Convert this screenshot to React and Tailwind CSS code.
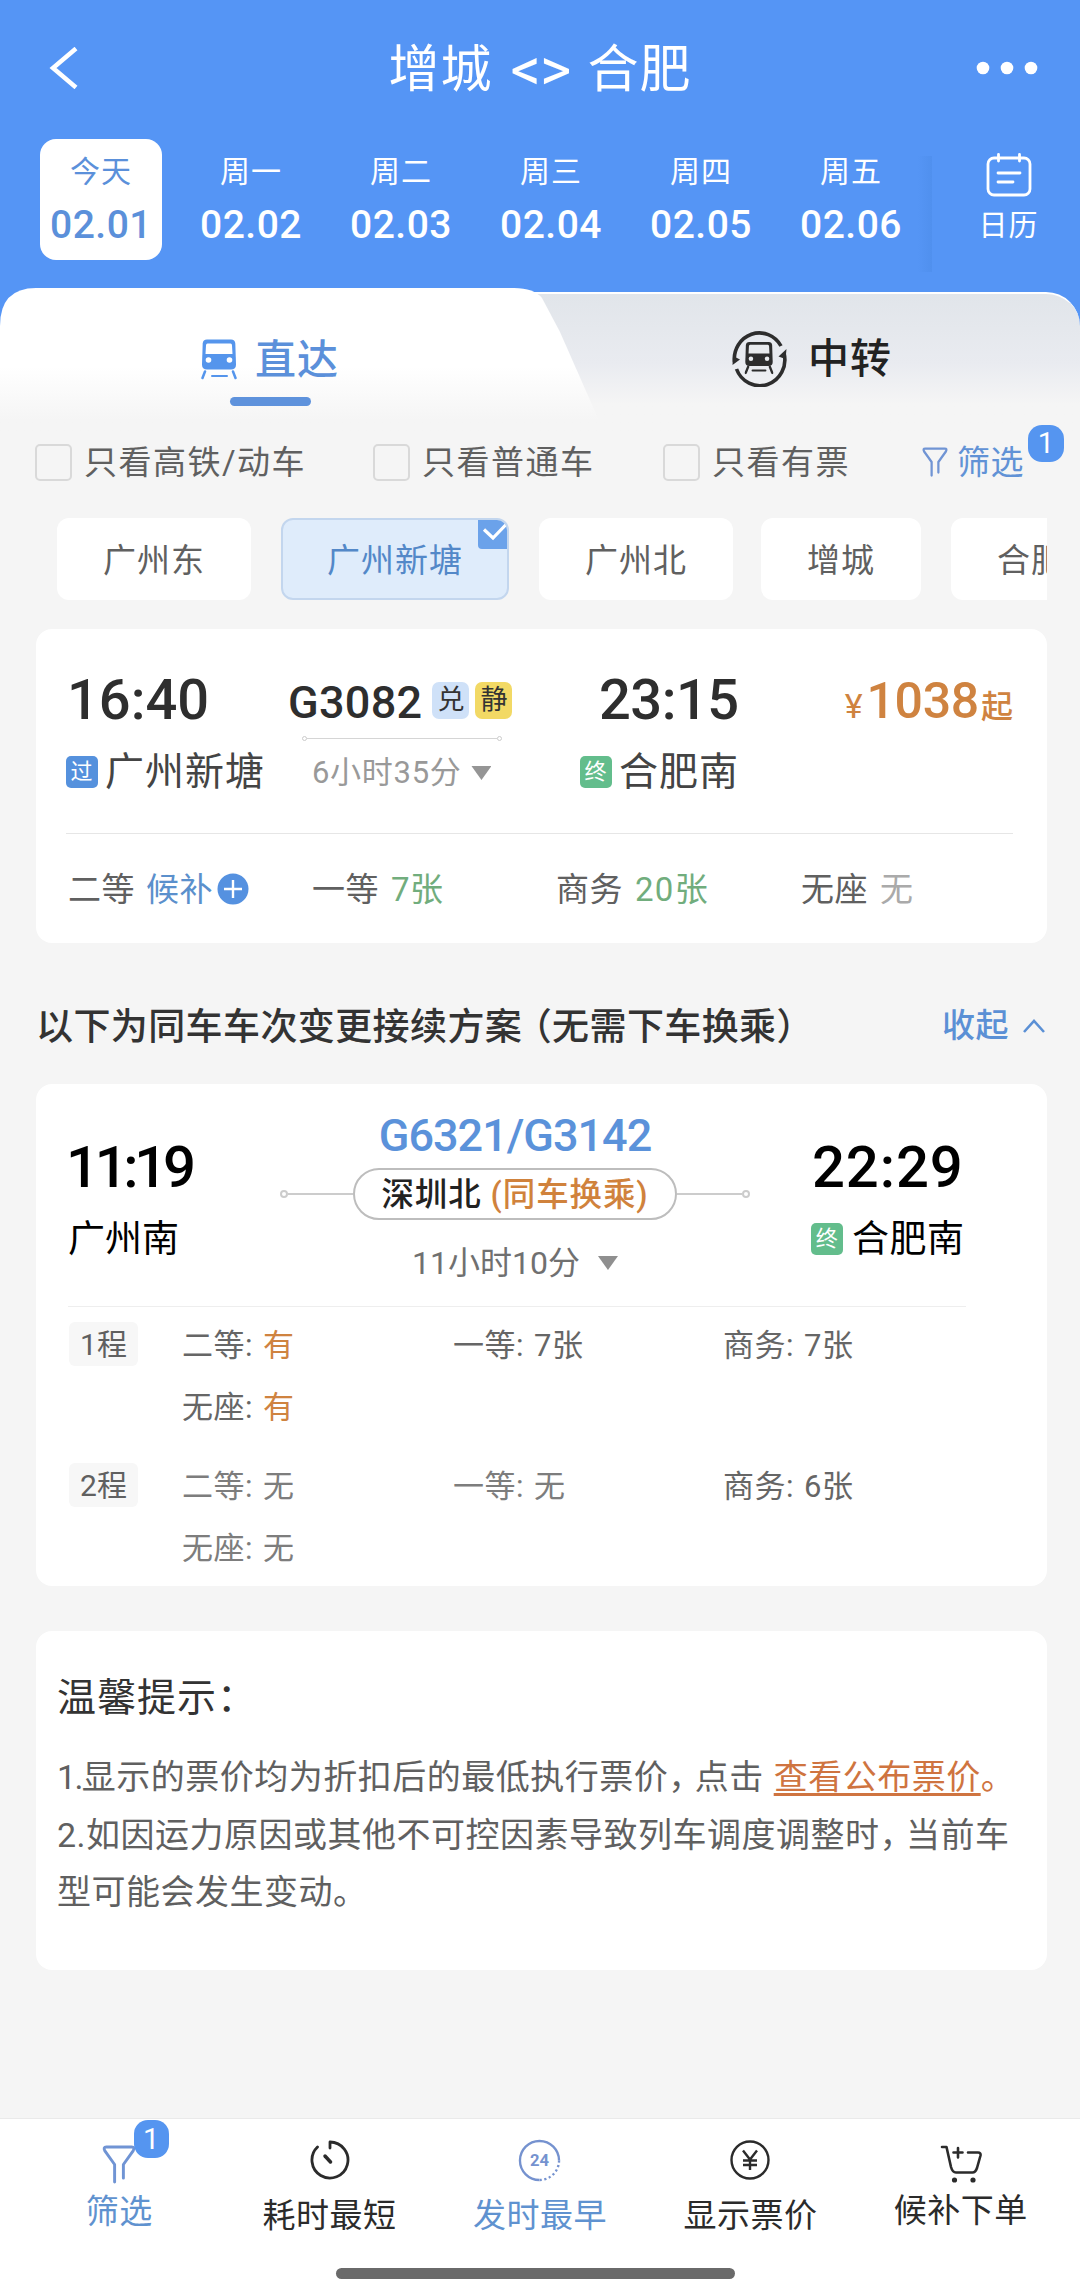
// File: src/App.jsx
import { useState } from 'react';

const days = [
  { week: '今天', date: '02.01' },
  { week: '周一', date: '02.02' },
  { week: '周二', date: '02.03' },
  { week: '周三', date: '02.04' },
  { week: '周四', date: '02.05' },
  { week: '周五', date: '02.06' },
];

const checks = [
  { label: '只看高铁/动车', width: 'w-[338px]' },
  { label: '只看普通车', width: 'w-[290px]' },
  { label: '只看有票', width: 'w-[259px]' },
];

const stations = [
  { name: '广州东', width: 'w-[194px] mr-[30px]' },
  { name: '广州新塘', width: 'w-[228px] mr-[30px]' },
  { name: '广州北', width: 'w-[194px] mr-[28px]' },
  { name: '增城', width: 'w-[160px] mr-[30px]' },
  { name: '合肥', width: 'w-[160px]' },
];

const legs = [
  {
    name: '1程',
    seats: [
      { type: '二等', left: '有' },
      { type: '一等', left: '7张' },
      { type: '商务', left: '7张' },
      { type: '无座', left: '有' },
    ],
  },
  {
    name: '2程',
    seats: [
      { type: '二等', left: '无' },
      { type: '一等', left: '无' },
      { type: '商务', left: '6张' },
      { type: '无座', left: '无' },
    ],
  },
];

function TrainIcon({ className, hole }) {
  return (
    <svg className={className} viewBox="0 0 36 40">
      <path fill="currentColor" d="M6 0H30Q34 0 34.3 4L35 25Q35 30 30 30H6Q1 30 1 25L1.7 4Q2 0 6 0Z" />
      <path fill={hole} d="M6.5 4H29.5Q31 4 31 6L31.5 14.5H4.500L5 6Q5 4 6.500 4Z" />
      <circle cx="7.500" cy="20.500" r="2.800" fill={hole} />
      <circle cx="28.500" cy="20.500" r="2.800" fill={hole} />
      <path fill="none" stroke="currentColor" strokeWidth="2.500" strokeLinecap="round" d="M4 32L1.500 38.500M32 32L34.500 38.500" />
      <path stroke="currentColor" strokeWidth="2" strokeLinecap="round" d="M11 36.500H26" />
    </svg>
  );
}

function TransferIcon() {
  return (
    <svg className="h-[58px] w-[56px] text-[#2d2d2d]" viewBox="0 0 56 58" fill="none">
      <path stroke="currentColor" strokeWidth="3.600" d="M3.500 33A25 26 0 0 1 50 17" />
      <path stroke="currentColor" strokeWidth="3.600" d="M53 24A25 26 0 0 1 5.500 40" />
      <path fill="currentColor" d="M1.500 36L2 27L9 30.500Z" />
      <path fill="currentColor" d="M55.500 20L54.500 30L47.500 27.500Z" />
      <svg x="13.500" y="12.500" width="29" height="33" viewBox="0 0 36 40">
        <path fill="currentColor" d="M6 0H30Q34 0 34.300 4L35 25Q35 30 30 30H6Q1 30 1 25L1.700 4Q2 0 6 0Z" />
        <path fill="#e9ebee" d="M7 3.500H29Q30.500 3.500 30.500 5.500L31 14.500H5L5.500 5.500Q5.500 3.500 7 3.500Z" />
        <circle cx="8" cy="21" r="2.800" fill="#e9ebee" />
        <circle cx="28" cy="21" r="2.800" fill="#e9ebee" />
        <path stroke="currentColor" strokeWidth="3" strokeLinecap="round" d="M4.500 31L1.500 38.500M31.500 31L34.500 38.500" />
        <path stroke="currentColor" strokeWidth="2.500" strokeLinecap="round" d="M10 35.500H26" />
      </svg>
    </svg>
  );
}

function FunnelIcon({ className }) {
  return (
    <svg className={className} viewBox="0 0 34 40" fill="none" stroke="#7094d4" strokeWidth="3" strokeLinecap="round" strokeLinejoin="round">
      <path d="M12.500 38V20L2.500 6Q0.500 2 4 2H30Q33.500 2 31.500 6L21.500 20V34" />
    </svg>
  );
}

function StationTag({ text, className }) {
  return (
    <span className={`flex h-8 w-8 items-center justify-center rounded-[5px] text-[22px] leading-8 text-white ${className}`}>
      {text}
    </span>
  );
}

function Header() {
  return (
    <header className="h-[288px] bg-[#5595f5] text-white">
      <div className="flex h-[136px] items-center justify-between pr-[42px] pl-[48px]">
        <svg className="h-[42px] w-[62px]" viewBox="0 0 62 42" fill="none" stroke="currentColor" strokeWidth="4.500">
          <path d="M28 1.500L5 21L28 40.500" />
        </svg>
        <h1 className="flex items-center pt-[3px] pr-[6px] text-[51px] leading-[60px] tracking-[1px]">
          增城
          <span className="mr-[17px] ml-[18px] text-[60px] leading-[60px] tracking-[-1px]">&lt;&gt;</span>
          合肥
        </h1>
        <svg className="h-[14px] w-[62px]" viewBox="0 0 62 14" fill="currentColor">
          <circle cx="7" cy="7" r="6.300" />
          <circle cx="31" cy="7" r="6.300" />
          <circle cx="55" cy="7" r="6.300" />
        </svg>
      </div>
      <div className="flex h-[152px] pl-[26px]">
        {days.map((d, i) => (
          <div key={d.date} className="flex w-[150px] shrink-0 justify-center pt-[3px]">
            <div className={`flex h-[121px] w-[122px] flex-col items-center rounded-[16px] pt-[15px] ${i === 0 ? 'bg-white text-[#5b90da]' : ''}`}>
              <span className="text-[30px] leading-[36px] tracking-[1px]">{d.week}</span>
              <span className="mt-[15px] text-[39px] leading-[40px] font-medium tracking-[0.500px]">{d.date}</span>
            </div>
          </div>
        ))}
        <div className="mt-[20px] -ml-[8px] h-[116px] w-[14px] bg-linear-to-l from-[#5090ee] to-[#5595f5]" />
        <div className="flex flex-1 flex-col items-center pt-[17px] pl-[5px]">
          <svg className="h-[44px] w-[46px]" viewBox="0 0 46 44" fill="none" stroke="currentColor" strokeWidth="2.800" strokeLinecap="round">
            <rect x="2" y="5" width="42" height="37" rx="6" />
            <path d="M12.500 1.500V8M33.500 1.500V8M12 20H34M12 29H27" />
          </svg>
          <span className="mt-[11px] text-[29px] leading-[36px] tracking-[1px]">日历</span>
        </div>
      </div>
    </header>
  );
}

function Tabs() {
  return (
    <div className="flex h-[144px] bg-linear-to-b from-[#5595f5] from-40% to-[#f5f5f5] to-40%">
      <div className="z-10 flex w-[604px] flex-col items-center bg-linear-to-b from-white from-55% to-[#f5f5f5] to-92% pr-[64px] [clip-path:path('M0_38Q0_0_36_0H514Q534_0_542_10L560_44L604_144H0Z')]">
        <div className="mt-[48px] flex h-[46px] items-center">
          <TrainIcon className="h-[41px] w-[36px] text-[#5595ec]" hole="#fff" />
          <span className="ml-[18px] pt-px text-[41px] leading-[46px] font-medium tracking-[1px] text-[#5b90da]">直达</span>
        </div>
        <div className="mt-[15px] h-[9px] w-[81px] rounded-full bg-[#5e92dc]" />
      </div>
      <div className="mt-1 -ml-[104px] flex-1 rounded-tr-[34px] border-t-2 border-white bg-linear-to-b from-[#e1e5ea] via-[#e9ebf0] via-50% to-[#f5f5f5] to-80% pl-[231px]">
        <div className="mt-[34px] flex items-center">
          <TransferIcon />
          <span className="ml-[21px] pt-[3px] text-[41px] leading-[56px] font-medium tracking-[1px] text-[#222]">中转</span>
        </div>
      </div>
    </div>
  );
}

function Filters() {
  const [picked, setPicked] = useState('广州新塘');
  return (
    <div>
      <div className="flex h-[60px] items-center pl-[35px]">
        {checks.map((c) => (
          <label key={c.label} className={`flex shrink-0 items-center ${c.width}`}>
            <span className="h-[37px] w-[37px] rounded-[5px] border-2 border-[#d9d9d9]" />
            <span className="ml-[12px] pt-[2px] text-[33px] leading-[40px] tracking-[1.500px] text-[#606060]">{c.label}</span>
          </label>
        ))}
        <div className="relative flex items-center text-[#6192d6]">
          <FunnelIcon className="h-[30px] w-[26px]" />
          <span className="ml-[9px] pt-[2px] text-[33px] leading-[40px] tracking-[0.500px]">筛选</span>
          <span className="absolute -top-[16px] left-[106px] flex h-[37px] w-[36px] items-center justify-center rounded-[14px] bg-[#5595f0] text-[29px] leading-[37px] text-white">1</span>
        </div>
      </div>
      <div className="mt-[26px] mr-[33px] ml-[57px] flex h-[83px] overflow-hidden">
        {stations.map((s) => (
          <button
            key={s.name}
            type="button"
            onClick={() => setPicked(s.name)}
            className={`relative h-[82px] shrink-0 overflow-hidden rounded-[12px] text-[33px] tracking-[1px] ${s.width} ${picked === s.name ? 'border-2 border-[#c3d6ee] bg-[#dfecfb] leading-[82px] text-[#5388c8]' : 'bg-white leading-[86px] text-[#606060]'}`}
          >
            {s.name}
            {picked === s.name && (
              <svg className="absolute top-0 right-0 h-[29px] w-[29px]" viewBox="0 0 29 29" fill="none">
                <path fill="#6ba2ea" d="M0 0H29V29H4Q0 29 0 25Z" />
                <path stroke="#fff" strokeWidth="3.200" d="M6 9.500L15 18L28 4.500" />
              </svg>
            )}
          </button>
        ))}
      </div>
    </div>
  );
}

function DirectCard() {
  return (
    <section className="mt-[28px] mr-[33px] ml-[36px] h-[314px] rounded-[16px] bg-white px-[30px] pt-[43px]">
      <div className="flex h-[161px]">
        <div className="w-[222px] shrink-0">
          <div className="pl-px text-[56px] leading-[56px] font-medium text-[#2e2e2e]">16:40</div>
          <div className="mt-[22px] flex items-center text-[39px] leading-[44px] tracking-[1px] text-[#444]">
            <StationTag text="过" className="mr-[7px] bg-[#5591dd]" />
            广州新塘
          </div>
        </div>
        <div className="w-[292px] shrink-0">
          <div className="flex h-[56px] items-center">
            <span className="pt-[5px] text-[45px] leading-[50px] font-medium tracking-[0.300px] text-[#2e2e2e]">G3082</span>
            <span className="ml-[10px] flex h-[37px] w-[37px] items-center justify-center rounded-[7px] bg-[#cfe1f8] text-[27px] leading-[37px] text-[#333]">兑</span>
            <span className="ml-[6px] flex h-[37px] w-[37px] items-center justify-center rounded-[7px] bg-[#f2d965] text-[27px] leading-[37px] text-[#333]">静</span>
          </div>
          <div className="mt-[8px] ml-[14px] flex w-[200px] items-center">
            <span className="h-[5px] w-[5px] rounded-full border border-[#ccc]" />
            <span className="h-px flex-1 bg-[#d5d5d5]" />
            <span className="h-[5px] w-[5px] rounded-full border border-[#ccc]" />
          </div>
          <div className="mt-[11px] ml-[24px] flex items-center text-[31px] leading-[42px] tracking-[0.700px] text-[#999]">
            6小时35分
            <span className="ml-[10px] h-[14px] w-[20px] bg-[#959595] [clip-path:polygon(0_0,100%_0,50%_100%)]" />
          </div>
        </div>
        <div className="w-[200px] shrink-0">
          <div className="pl-[19px] text-[56px] leading-[56px] font-medium tracking-[-0.500px] text-[#2e2e2e]">23:15</div>
          <div className="mt-[22px] flex items-center text-[39px] leading-[44px] tracking-[1px] text-[#444]">
            <StationTag text="终" className="mr-[7px] bg-[#63bd8c]" />
            合肥南
          </div>
        </div>
        <div className="-mr-px flex h-[56px] flex-1 items-baseline justify-end pr-[5px] text-[#cf8340]">
          <span className="mr-[4px] text-[34px]">¥</span>
          <span className="text-[50px] leading-[58px] font-medium tracking-[-0.300px]">1038</span>
          <span className="ml-[2px] text-[32px] font-medium">起</span>
        </div>
      </div>
      <div className="h-px w-[947px] bg-[#e6e6e6]" />
      <div className="mt-[34px] flex h-[44px] pl-[2px] text-[33px] leading-[44px] tracking-[0.500px] text-[#606060]">
        <div className="flex w-[244px] items-center">
          二等<span className="ml-[11px] text-[#5b90cc]">候补</span>
          <svg className="mb-[2px] ml-[4px] h-[32px] w-[32px]" viewBox="0 0 32 32">
            <circle cx="16" cy="16" r="15.500" fill="#5591e0" />
            <path stroke="#fff" strokeWidth="2.400" d="M7 16H25M16 7V25" />
          </svg>
        </div>
        <div className="w-[244px]">一等<span className="ml-[12px] text-[#71ad7d]">7张</span></div>
        <div className="w-[245px]">商务<span className="ml-[12px] tracking-[1.300px] text-[#71ad7d]">20张</span></div>
        <div>无座<span className="ml-[12px] text-[#aaa]">无</span></div>
      </div>
    </section>
  );
}

function TransferCard() {
  return (
    <section className="mt-[32px] mr-[33px] ml-[36px] h-[502px] rounded-[16px] bg-white pt-[30px] text-black">
      <div className="flex h-[192px] pl-[32px]">
        <div className="w-[212px] pt-[23px]">
          <div className="ml-[-2px] text-[58px] leading-[60px] font-medium tracking-[-4.300px]">11:19</div>
          <div className="mt-[21px] text-[37px] leading-[44px]">广州南</div>
        </div>
        <div className="flex w-[470px] flex-col items-center">
          <div className="text-[45px] leading-[44px] font-medium tracking-[-1px] text-[#5b92da]">G6321/G3142</div>
          <div className="mt-[10px] flex items-center">
            <span className="h-[8px] w-[8px] rounded-full border-2 border-[#ccc]" />
            <span className="h-[2px] w-[65px] bg-[#ccc]" />
            <span className="flex h-[52px] w-[324px] items-center justify-center rounded-full border-2 border-[#bdbdbd] pt-[2px] text-[32.500px] leading-[48px] font-medium tracking-[0.900px] whitespace-pre text-[#222]">
              深圳北 <span className="text-[#d0823c]">(同车换乘)</span>
            </span>
            <span className="h-[2px] w-[65px] bg-[#ccc]" />
            <span className="h-[8px] w-[8px] rounded-full border-2 border-[#ccc]" />
          </div>
          <div className="mt-[22px] flex items-center text-[32px] leading-[42px] text-[#707070]">
            11小时10分
            <span className="ml-[18px] h-[14px] w-[20px] bg-[#8f8f8f] [clip-path:polygon(0_0,100%_0,50%_100%)]" />
          </div>
        </div>
        <div className="flex flex-1 flex-col items-start pt-[23px] pl-[62px]">
          <div className="text-[58px] leading-[60px] font-medium tracking-[0.900px]">22:29</div>
          <div className="mt-[21px] flex items-center text-[37px] leading-[44px] tracking-[0.500px]">
            <StationTag text="终" className="mr-[9px] mb-[2px] -ml-px bg-[#63bd8c]" />
            合肥南
          </div>
        </div>
      </div>
      <div className="ml-[32px] h-px w-[898px] bg-[#eee]" />
      {legs.map((leg) => (
        <div key={leg.name} className="flex h-[141px] pt-[15px] pl-[33px]">
          <span className="mr-[44px] flex h-[44px] w-[69px] items-center justify-center rounded-[6px] bg-[#f7f7f7] pt-[2px] text-[30px] leading-[42px] text-[#606060]">{leg.name}</span>
          <div className="grid flex-1 grid-cols-[271px_270px_1fr] content-start gap-y-[18px] pt-[2px] text-[31px] leading-[44px] tracking-[0.500px] text-[#666]">
            {legSeats(leg)}
          </div>
        </div>
      ))}
    </section>
  );
}

// sold-out classes are drawn in a lighter grey
function legSeats(leg) {
  return leg.seats.map((s) => (
    <div key={s.type} className={s.left === '无' ? 'text-[#7d7d7d]' : ''}>
      {s.type}:<span className={`ml-[10px] ${s.left === '有' ? 'text-[#cf8340]' : ''}`}>{s.left}</span>
    </div>
  ));
}

// half-width fullwidth punctuation
function Comma() {
  return <span className="mr-[9px] [font-feature-settings:'halt']">，</span>;
}

function Tips() {
  return (
    <section className="mt-[45px] mr-[33px] ml-[36px] h-[339px] rounded-[16px] bg-white pt-[43px] pl-[21px]">
      <h2 className="text-[39px] leading-[48px] tracking-[1px] text-[#333]">温馨提示：</h2>
      <div className="mt-[27px] text-[34px] leading-[57.500px] tracking-[0.500px] whitespace-nowrap text-[#606060]">
        <p>
          <span className="tracking-[-1.700px]">1.</span>显示的票价均为折扣后的最低执行票价<Comma />点击
          <a className="ml-[10px] text-[#cf7440] underline decoration-[3px] underline-offset-[4px]">查看公布票价</a>
          <span className="text-[#cf7440]">。</span>
        </p>
        <p>2.如因运力原因或其他不可控因素导致列车调度调整时<Comma />当前车</p>
        <p>型可能会发生变动。</p>
      </div>
    </section>
  );
}

function BottomBar() {
  return (
    <footer className="mt-[148px] h-[176px] border-t border-[#eaeaea] bg-white text-[33px] leading-[40px] tracking-[0.500px] text-[#2b2b2b]">
      <nav className="grid h-[149px] grid-cols-5 px-[14px]">
        <div className="relative flex flex-col items-center text-[#5f92cf]">
          <FunnelIcon className="mt-[26px] h-[39px] w-[34px]" />
          <span className="mt-[8px]">筛选</span>
          <span className="absolute top-px left-[120px] flex h-[38px] w-[35px] items-center justify-center rounded-[14px] bg-[#5595f0] text-[29px] leading-[38px] text-white">1</span>
        </div>
        <div className="flex flex-col items-center">
          <svg className="mt-[21px] h-[40px] w-[40px]" viewBox="0 0 40 40" fill="none" stroke="currentColor" strokeLinecap="round" strokeLinejoin="round">
            <path strokeWidth="2.800" d="M20 8V2A18 18 0 1 1 7.500 7" />
            <path strokeWidth="3.500" d="M15 16L20.500 22" />
          </svg>
          <span className="mt-[16px]">耗时最短</span>
        </div>
        <div className="flex flex-col items-center text-[#5f92d0]">
          <svg className="mt-[20px] h-[43px] w-[43px]" viewBox="0 0 44 44" fill="none" stroke="#7592cf" strokeWidth="2.400">
            <path d="M22 42A20 20 0 1 1 42 22" />
            <path strokeDasharray="2.200 2.600" d="M42 22A20 20 0 0 1 22 42" />
            <text x="22" y="28" textAnchor="middle" fontSize="17" fontWeight="700" letterSpacing="0" fill="#7592cf" stroke="none">24</text>
          </svg>
          <span className="mt-[14px]">发时最早</span>
        </div>
        <div className="flex flex-col items-center">
          <svg className="mt-[21px] h-[40px] w-[40px]" viewBox="0 0 40 40" fill="none" stroke="currentColor" strokeWidth="2.400">
            <circle cx="20" cy="20" r="18.500" />
            <path d="M13 10.500L20 19.500L27 10.500M20 19.500V30M13 20.500H27M13 25H27" />
          </svg>
          <span className="mt-[16px]">显示票价</span>
        </div>
        <div className="flex flex-col items-center">
          <svg className="mt-[26px] h-[38px] w-[42px]" viewBox="0 0 42 38" fill="none" stroke="currentColor" strokeWidth="2.600" strokeLinecap="round" strokeLinejoin="round">
            <path d="M2 2H6.500L11 22Q12.500 27.500 16 27.500H32.500Q35.500 27.500 37 23L40.500 10.500Q41 7.500 38 7.500H28M18 3V12.500M13.500 7.500H22.500" />
            <circle cx="14.500" cy="35" r="1.300" fill="currentColor" />
            <circle cx="33" cy="35" r="1.300" fill="currentColor" />
          </svg>
          <span className="mt-[8px]">候补下单</span>
        </div>
      </nav>
      <div className="ml-[336px] h-[11px] w-[399px] rounded-full bg-[#6a6a6a]" />
    </footer>
  );
}

export default function App() {
  return (
    <div className="h-[2294px] w-[1080px] overflow-hidden bg-[#f5f5f5] font-['Roboto','Noto_Sans_CJK_SC',sans-serif]">
      <Header />
      <Tabs />
      <Filters />
      <DirectCard />
      <div className="mt-[59px] flex h-[50px] items-center justify-between pr-[35px] pl-[36px]">
        <span className="pt-[2px] text-[37px] leading-[48px] font-medium tracking-[0.400px] text-[#333]">
          以下为同车车次变更接续方案
          <span className="ml-[11px] [font-feature-settings:'halt']">（</span>
          无需下车换乘
          <span className="[font-feature-settings:'halt']">）</span>
        </span>
        <span className="flex items-center pb-[2px] text-[33px] leading-[44px] font-medium tracking-[0.500px] text-[#5b90d5]">
          收起
          <svg className="ml-[14px] h-[14px] w-[22px]" viewBox="0 0 22 14" fill="none" stroke="currentColor" strokeWidth="2.600">
            <path d="M1 13L11 2L21 13" />
          </svg>
        </span>
      </div>
      <TransferCard />
      <Tips />
      <BottomBar />
    </div>
  );
}
